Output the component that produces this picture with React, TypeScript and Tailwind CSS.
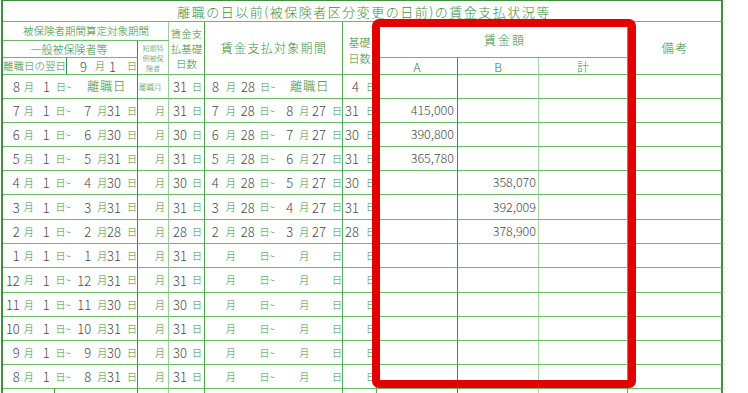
import React from 'react';

const G = 'text-[#3b8e3b]';
const NUM = 'text-[#4a4a4a] text-[13px]';
const SM = 'text-[#3b8e3b] text-[10px]';

// right-edge line colour of each of the 9 columns
const colLine = [
  'border-r border-r-[#3f8f3f]',
  'border-r border-r-[#9ccf9c]',
  'border-r border-r-[#4f9f4f]',
  'border-r border-r-[#5aa85a]',
  'border-r border-r-[#5aa85a]',
  'border-r border-r-[#3f8f3f]',
  'border-r border-r-[#a8d8a8]',
  'border-r border-r-[#5aa85a]',
  'border-r-2 border-r-[#3f8f3f]',
];

type Row = {
  m: string;
  ed: string;
  days: string;
  pm1: string;
  pm2: string;
  pd2: string;
  bd: string;
  a?: string;
  b?: string;
  first?: boolean;
};

const rows: Row[] = [
  { m: '8', ed: '', days: '31', pm1: '8', pm2: '', pd2: '', bd: '4', first: true },
  { m: '7', ed: '31', days: '31', pm1: '7', pm2: '8', pd2: '27', bd: '31', a: '415,000' },
  { m: '6', ed: '30', days: '30', pm1: '6', pm2: '7', pd2: '27', bd: '30', a: '390,800' },
  { m: '5', ed: '31', days: '31', pm1: '5', pm2: '6', pd2: '27', bd: '31', a: '365,780' },
  { m: '4', ed: '30', days: '30', pm1: '4', pm2: '5', pd2: '27', bd: '30', b: '358,070' },
  { m: '3', ed: '31', days: '31', pm1: '3', pm2: '4', pd2: '27', bd: '31', b: '392,009' },
  { m: '2', ed: '28', days: '28', pm1: '2', pm2: '3', pd2: '27', bd: '28', b: '378,900' },
  { m: '1', ed: '31', days: '31', pm1: '', pm2: '', pd2: '', bd: '' },
  { m: '12', ed: '31', days: '31', pm1: '', pm2: '', pd2: '', bd: '' },
  { m: '11', ed: '30', days: '30', pm1: '', pm2: '', pd2: '', bd: '' },
  { m: '10', ed: '31', days: '31', pm1: '', pm2: '', pd2: '', bd: '' },
  { m: '9', ed: '30', days: '30', pm1: '', pm2: '', pd2: '', bd: '' },
  { m: '8', ed: '31', days: '31', pm1: '', pm2: '', pd2: '', bd: '' },
];

const Cell: React.FC<{ c: number; className?: string; children?: React.ReactNode }> = ({ c, className = '', children }) => (
  <div className={`border-b border-b-[#6cb96c] ${colLine[c]} ${className}`}>{children}</div>
);

const DataRow: React.FC<{ r: Row }> = ({ r }) => (
  <>
    <Cell c={0} className="flex items-center">
      <span className={`w-[17px] text-right ${NUM}`}>{r.m}</span>
      <span className={`w-[13px] pl-[4px] ${SM}`}>月</span>
      <span className={`w-[17px] text-right ${NUM}`}>1</span>
      <span className={`w-[24px] pl-[6px] ${SM}`}>日~</span>
      {r.first ? (
        <span className={`pl-[13px] text-[12.5px] tracking-[0.5px] ${G}`}>離職日</span>
      ) : (
        <>
          <span className={`w-[18px] text-right ${NUM}`}>{r.m}</span>
          <span className={`w-[14px] pl-[6px] ${SM}`}>月</span>
          <span className={`w-[16px] text-right ${NUM}`}>{r.ed}</span>
          <span className={`pl-[6px] ${SM}`}>日</span>
        </>
      )}
    </Cell>
    <Cell c={1} className="flex items-center justify-end pr-[3px]">
      {r.first ? (
        <span className={`w-full pl-[1px] text-[7.5px] ${G}`}>離職月</span>
      ) : (
        <span className={SM}>月</span>
      )}
    </Cell>
    <Cell c={2} className="flex items-center">
      <span className={`w-[18px] text-right ${NUM}`}>{r.days}</span>
      <span className={`pl-[5px] ${SM}`}>日</span>
    </Cell>
    <Cell c={3} className="flex items-center">
      <span className={`w-[14px] text-right ${NUM}`}>{r.pm1}</span>
      <span className={`w-[16px] pl-[7px] ${SM}`}>月</span>
      <span className={`w-[20px] text-right ${NUM}`}>{r.pm1 ? '28' : ''}</span>
      <span className={`w-[25px] pl-[5px] ${SM}`}>日~</span>
      {r.first ? (
        <span className={`pl-[10px] text-[12.5px] tracking-[0.5px] ${G}`}>離職日</span>
      ) : (
        <>
          <span className={`w-[14px] text-right ${NUM}`}>{r.pm2}</span>
          <span className={`w-[16px] pl-[6px] ${SM}`}>月</span>
          <span className={`w-[17px] text-right ${NUM}`}>{r.pd2}</span>
          <span className={`pl-[6px] ${SM}`}>日</span>
        </>
      )}
    </Cell>
    <Cell c={4} className="flex items-center">
      <span className={`w-[18px] text-right ${NUM}`}>{r.bd}</span>
      <span className={`pl-[7px] ${SM}`}>日</span>
    </Cell>
    <Cell c={5} className="flex items-center justify-end pr-[3px]">
      <span className="text-[12.5px] text-[#4a4a4a]">{r.a}</span>
    </Cell>
    <Cell c={6} className="flex items-center justify-end pr-[2px]">
      <span className="text-[12.5px] text-[#4a4a4a]">{r.b}</span>
    </Cell>
    <Cell c={7} />
    <Cell c={8} />
  </>
);

export default function App() {
  return (
    <div className="relative h-[393px] w-[748px] overflow-hidden bg-white font-['Noto_Sans_CJK_JP',sans-serif] font-light leading-none">
      <div className="ml-[1px] grid w-[722px] grid-cols-[135px_31px_36px_138px_34px_81px_81px_89px_95px] grid-rows-[21px_19px_17px_17px_24px_24px_24px_24px_24px_25px_24px_24px_25px_24px_24px_24px_24px_24px] border-l-2 border-t border-l-[#3f8f3f] border-t-[#3f8f3f]">
        {/* title */}
        <Cell c={8} className={`col-span-9 flex items-center justify-center pl-[4px] text-[13px] tracking-[1.5px] ${G}`}>
          離職の日以前(被保険者区分変更の日前)の賃金支払状況等
        </Cell>

        {/* header row 1 */}
        <Cell c={1} className={`col-span-2 flex items-center justify-center pl-[1px] text-[10.5px] ${G}`}>
          被保険者期間算定対象期間
        </Cell>
        <Cell c={2} className={`row-span-3 flex flex-col items-center justify-center pt-[1px] text-[10.5px] leading-[15px] ${G}`}>
          <span>賃金支</span>
          <span>払基礎</span>
          <span>日数</span>
        </Cell>
        <Cell c={3} className={`row-span-3 flex items-center justify-center pl-[1px] text-[12px] tracking-[1.3px] ${G}`}>
          賃金支払対象期間
        </Cell>
        <Cell c={4} className={`row-span-3 flex flex-col items-center justify-center pt-[3px] text-[11px] leading-[16px] ${G}`}>
          <span>基礎</span>
          <span>日数</span>
        </Cell>
        <Cell c={7} className={`col-span-3 row-span-2 flex items-center justify-center pl-[6px] text-[12px] tracking-[2px] ${G}`}>
          賃金額
        </Cell>
        <Cell c={8} className={`row-span-3 flex items-center justify-center pl-[1px] text-[12.5px] tracking-[1px] ${G}`}>
          備考
        </Cell>

        {/* header row 2 */}
        <Cell c={0} className={`flex items-center justify-center pr-[2px] text-[11px] ${G}`}>
          一般被保険者等
        </Cell>
        <Cell c={1} className={`row-span-2 flex flex-col items-center justify-center text-[7px] leading-[10px] ${G}`}>
          <span>短期特</span>
          <span>例被保</span>
          <span>険者</span>
        </Cell>

        {/* header row 3 */}
        <Cell c={0} className="flex items-stretch">
          <div className={`flex w-[69px] items-center justify-center border-r border-r-[#3f8f3f] text-[10.5px] ${G}`}>
            離職日の翌日
          </div>
          <div className="flex items-center">
            <span className={`w-[20px] text-right ${NUM}`}>9</span>
            <span className={`w-[14px] pl-[8px] ${SM}`}>月</span>
            <span className={`w-[15px] text-right ${NUM}`}>1</span>
            <span className={`pl-[11px] ${SM}`}>日</span>
          </div>
        </Cell>
        <Cell c={5} className="flex items-center justify-center pt-[2px] text-[12px] text-[#3a7a3a]">
          A
        </Cell>
        <Cell c={6} className="flex items-center justify-center pt-[2px] text-[12px] text-[#3a7a3a]">
          B
        </Cell>
        <Cell c={7} className={`flex items-center justify-center pt-[2px] text-[12px] ${G}`}>
          計
        </Cell>

        {rows.map((r, i) => (
          <DataRow key={i} r={r} />
        ))}

        {/* next block of the form, cut off by the window */}
        <Cell c={0} className="flex">
          <div className="w-[52px] border-r border-r-[#3f8f3f]" />
        </Cell>
        <Cell c={1} />
        <Cell c={2} />
        <Cell c={3} />
        <Cell c={4} />
        <Cell c={5} />
        <Cell c={6} />
        <Cell c={7} />
        <Cell c={8} />
      </div>

      {/* red highlight around the wage columns */}
      <div className="absolute left-[372px] top-[19px] h-[369px] w-[264px] rounded-[7px] border-[8px] border-[#e30000]" />
    </div>
  );
}
